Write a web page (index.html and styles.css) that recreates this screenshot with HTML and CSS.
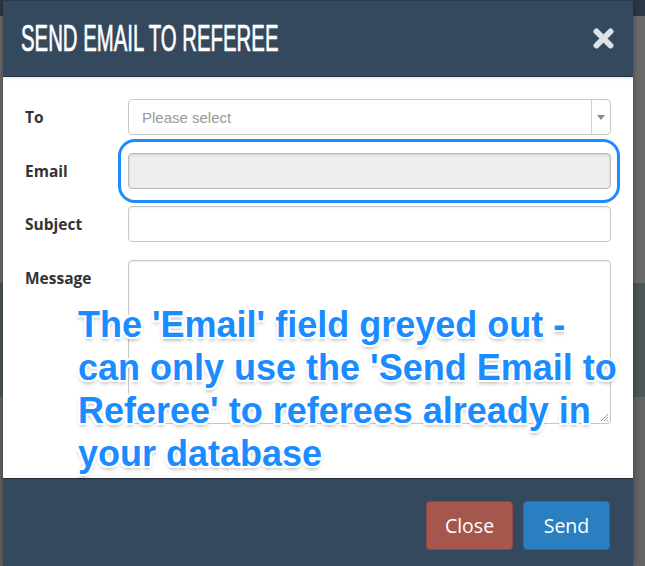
FILE: index.html
```html
<!DOCTYPE html>
<html lang="en">
<head>
<meta charset="utf-8">
<title>Send Email to Referee</title>
<link rel="stylesheet" href="styles.css">
</head>
<body>
<div class="modal">
  <div class="modal-header">
    <h1 class="title"><span class="title-text">SEND EMAIL TO REFEREE</span></h1>
    <button class="close-x" aria-label="Close">
      <svg width="21" height="21" viewBox="0 0 21 21"><path d="M3.5 3.5 L17.5 17.5 M17.5 3.5 L3.5 17.5" stroke="#dde2e8" stroke-width="6" stroke-linecap="round"/></svg>
    </button>
  </div>
  <div class="modal-body">
    <div class="form">
      <div class="label">To</div>
      <div class="field select"><span class="placeholder">Please select</span><span class="select-btn"><span class="caret"></span></span></div>
      <div class="label">Email</div>
      <div class="field input disabled"></div>
      <div class="label">Subject</div>
      <div class="field input"></div>
      <div class="label">Message</div>
      <div class="field textarea">
        <svg class="grip" width="10" height="10" viewBox="0 0 10 10"><path d="M9 2 L2 9 M9 5 L5 9 M9 8 L8 9" stroke="#999" stroke-width="1"/></svg>
      </div>
    </div>
    <div class="highlight"></div>
    <p class="note">The 'Email' field greyed out -<br>can only use the 'Send Email to<br>Referee' to referees already in<br>your database</p>
  </div>
  <div class="modal-footer">
    <button class="btn btn-close">Close</button>
    <button class="btn btn-send">Send</button>
  </div>
</div>
</body>
</html>
```
FILE: styles.css
```css
html, body {
  margin: 0;
  padding: 0;
  height: 100%;
}
body {
  overflow: hidden;
  background: linear-gradient(to bottom,
    #2b3845 0, #2b3845 16px,
    #6a6a6a 16px, #6a6a6a 283px,
    #4c5556 283px, #4c5556 397px,
    #646464 397px, #646464 100%);
  font-family: "Open Sans", "Liberation Sans", sans-serif;
}
.modal {
  margin-left: 3px;
  width: 630px;
  background: #fff;
  box-shadow: 0 0 6px rgba(0,0,0,0.4);
}
.modal-header {
  height: 77px;
  box-sizing: border-box;
  background: #34495e;
  border-top: 1px solid #2a3a4b;
  border-bottom: 1px solid #24313f;
  display: flex;
  align-items: center;
  justify-content: space-between;
  padding: 0 19px 0 18px;
}
.title {
  margin: 0;
  font-family: "Liberation Sans", Arial, sans-serif;
  font-weight: 400;
  font-size: 37px;
  line-height: 40px;
  color: #fff;
  white-space: nowrap;
  width: 260px;
  -webkit-text-stroke: 0.7px #fff;
}
.title-text {
  display: inline-block;
  transform: scaleX(0.55);
  transform-origin: left center;
}
.close-x {
  border: 0;
  background: none;
  padding: 0;
  width: 21px;
  height: 21px;
  display: flex;
}
.modal-body {
  position: relative;
  height: 401px;
  box-sizing: border-box;
  padding: 22px 22px 0 22px;
  box-shadow: inset 0 4px 4px -3px rgba(0,0,0,0.12);
}
.form {
  display: grid;
  grid-template-columns: 103px 1fr;
  grid-template-rows: 36px 36px 36px 164px;
  row-gap: 17.5px;
}
.label {
  font-weight: 700;
  font-size: 15.5px;
  line-height: 36px;
  color: #333;
}
.field {
  border: 1px solid #c8c8c8;
  border-radius: 4px;
  background: #fff;
  box-shadow: inset 0 1px 2px rgba(0,0,0,0.08);
  box-sizing: border-box;
}
.select {
  display: flex;
  align-items: center;
  justify-content: space-between;
  padding-left: 13px;
  box-shadow: none;
}
.placeholder {
  font-family: "Liberation Sans", Arial, sans-serif;
  font-size: 15px;
  color: #999;
}
.select-btn {
  width: 18px;
  height: 100%;
  border-left: 1px solid #d0d0d0;
  display: flex;
  align-items: center;
  justify-content: center;
}
.caret {
  width: 0;
  height: 0;
  border-left: 4px solid transparent;
  border-right: 4px solid transparent;
  border-top: 5px solid #888;
}
.disabled {
  background: #eeeeee;
  border-color: #b9b9b9;
  box-shadow: inset 0 1px 3px rgba(0,0,0,0.12);
}
.textarea {
  display: flex;
  align-items: flex-end;
  justify-content: flex-end;
}
.grip {
  margin: 0 1px 1px 0;
}
.highlight {
  position: absolute;
  left: 115px;
  top: 62px;
  width: 502px;
  height: 64px;
  box-sizing: border-box;
  border: 3px solid #1c8cff;
  border-radius: 17px;
}
.note {
  position: absolute;
  left: 75px;
  top: 226px;
  margin: 0;
  font-family: "Liberation Sans", Arial, sans-serif;
  font-weight: 700;
  font-size: 36px;
  line-height: 43px;
  color: #1a8cff;
  white-space: nowrap;
  text-shadow:
    2px 0 0 #fff, -2px 0 0 #fff, 0 2px 0 #fff, 0 -2px 0 #fff,
    2px 2px 0 #fff, -2px -2px 0 #fff, 2px -2px 0 #fff, -2px 2px 0 #fff,
    0 3px 4px rgba(0,0,0,0.35);
}
.modal-footer {
  background: #34495e;
  border-top: 1px solid #1f2b38;
  height: 88px;
  box-sizing: border-box;
  display: flex;
  justify-content: flex-end;
  align-items: flex-start;
  gap: 10px;
  padding: 22px 23px 0 0;
}
.btn {
  width: 87px;
  height: 49px;
  border-radius: 4px;
  font-family: "Open Sans", sans-serif;
  font-size: 19.5px;
  color: #fff;
  padding: 0;
}
.btn-close {
  background: #a5574e;
  border: 1px solid #8e4841;
}
.btn-send {
  background: #2a7fc1;
  border: 1px solid #236ea8;
}
```
